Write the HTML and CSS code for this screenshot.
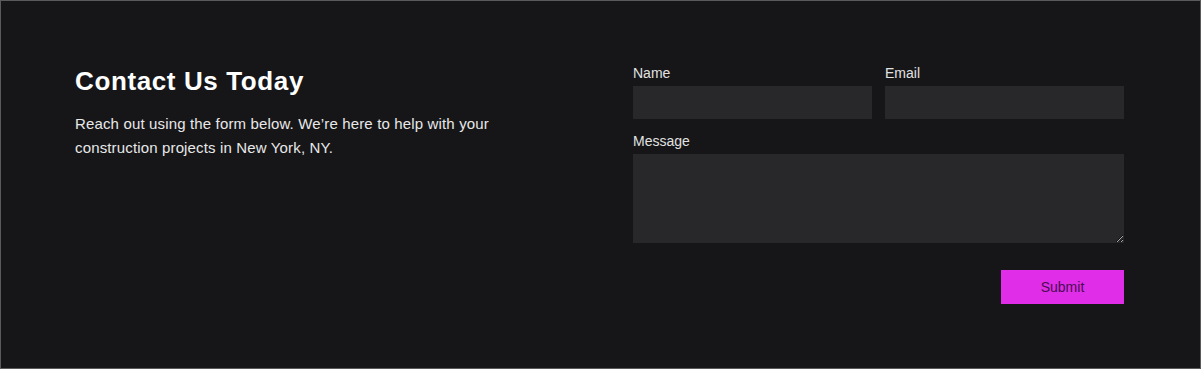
FILE: index.html
```html
<!DOCTYPE html>
<html lang="en">
<head>
    <meta charset="UTF-8">
    <meta name="viewport" content="width=device-width, initial-scale=1.0">
    <title>Contact Us</title>
    <link rel="stylesheet" href="styles.css">
</head>
<body>
    <section class="contact">
        <div class="contact-text">
            <h2>Contact Us Today</h2>
            <p>Reach out using the form below. We’re here to help with your <br>construction projects in New York, NY.</p>
        </div>
        <form class="contact-form">
            <div class="row">
                <div class="field">
                    <label for="name">Name</label>
                    <input type="text" id="name">
                </div>
                <div class="field">
                    <label for="email">Email</label>
                    <input type="email" id="email">
                </div>
            </div>
            <div class="field">
                <label for="message">Message</label>
                <textarea id="message"></textarea>
            </div>
            <div class="actions">
                <button type="submit">Submit</button>
            </div>
        </form>
    </section>
</body>
</html>
```

FILE: styles.css
```css
body, html {
    margin: 0;
    padding: 0;
    font-family: "Liberation Sans", Arial, sans-serif;
    background-color: #161618;
}

.contact {
    box-sizing: border-box;
    height: 369px;
    border: 1px solid #5a5a5c;
    background-color: #161618;
    padding: 64px 76px 64px 74px;
    display: grid;
    grid-template-columns: 491px 491px;
    column-gap: 67px;
}

.contact-text h2 {
    margin: 1px 0 0;
    font-size: 26px;
    line-height: 1.2;
    font-weight: bold;
    letter-spacing: 0.62px;
    color: #fff;
}

.contact-text p {
    margin: 15px 0 0;
    font-size: 15px;
    line-height: 24px;
    letter-spacing: 0.15px;
    color: #e8e8e8;
}

.contact-form {
    display: flex;
    flex-direction: column;
    gap: 14px;
}

.row {
    display: flex;
    gap: 13px;
}

.row .field {
    flex: 1;
}

.field label {
    display: block;
    font-size: 14px;
    line-height: 16px;
    color: #e2e2e2;
    margin-bottom: 5px;
}

.field input,
.field textarea {
    display: block;
    box-sizing: border-box;
    width: 100%;
    border: none;
    outline: none;
    background-color: #28282a;
    color: #fff;
    font-family: inherit;
    font-size: 14px;
    padding: 8px;
}

.field input {
    height: 33px;
}

.field textarea {
    height: 89px;
}

.actions {
    display: flex;
    justify-content: flex-end;
    margin-top: 13px;
}

.actions button {
    width: 123px;
    height: 34px;
    border: none;
    background-color: #e02ee8;
    color: #4a0d52;
    font-family: inherit;
    font-size: 14px;
    cursor: pointer;
}
```
